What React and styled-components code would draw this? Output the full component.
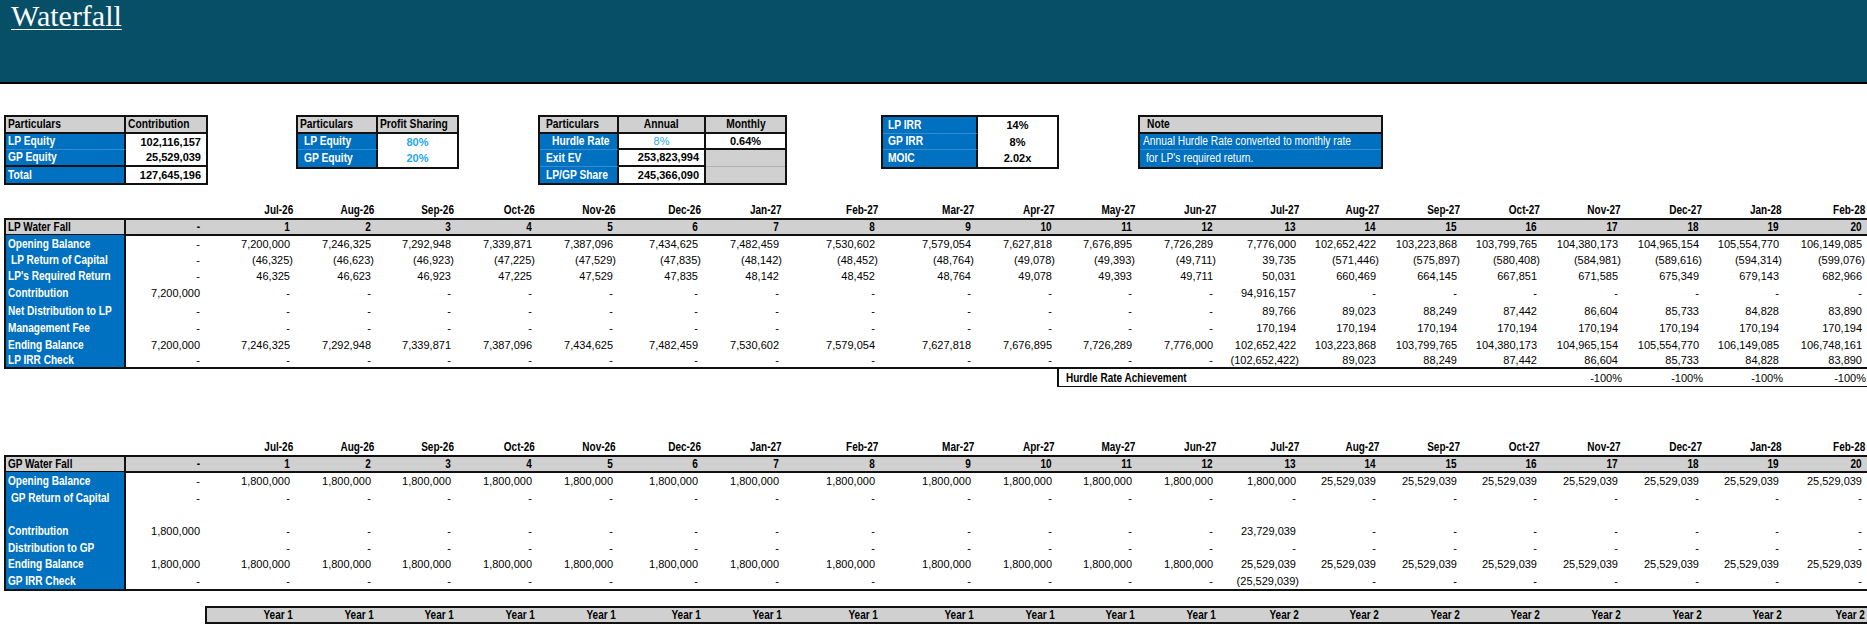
import React from "react";
import styled, { createGlobalStyle } from "styled-components";

const NARROW = `"Liberation Sans Narrow", "Arial Narrow", "Liberation Sans", Arial, sans-serif`;
const SANS = `"Liberation Sans", Arial, sans-serif`;
const SERIF = `"Liberation Serif", "Times New Roman", serif`;
const BLUE = "#0070C0";
const GREY = "#D0D0D0";
const LINE = "#111";
const SKY = "#1FA8EC";

const BG = { blue: BLUE, grey: GREY, white: "#fff", none: "transparent" };
const JUST = { left: "flex-start", center: "center", right: "flex-end" };
const BB = {
  thick: `2px solid ${LINE}`,
  faint: "1px solid rgba(255,255,255,0.2)",
  thin: "1px solid #B0B0B0",
  none: "none",
};

const Global = createGlobalStyle`
  html, body { margin: 0; padding: 0; background: #fff; overflow: hidden; }
  body { font-family: ${SANS}; width: 1867px; height: 627px; }
  *, *::before, *::after { box-sizing: border-box; }
`;

/* condensed text: the sheet uses a narrow face that is not installed */
const Nw = styled.span`
  display: inline-block;
  white-space: nowrap;
  transform: scaleX(0.82);
  transform-origin: ${(p) => p.$o || "left"} center;
`;

const Banner = styled.header`
  height: 84px;
  background: #074f67;
  border-bottom: 2px solid #000;
  padding: 1px 0 0 11px;
`;

const Title = styled.h1`
  margin: 0;
  display: inline-block;
  font-family: ${SERIF};
  font-weight: 400;
  font-size: 30px;
  line-height: 30px;
  color: #fff;
  text-decoration: underline;
  text-decoration-thickness: 1px;
  text-underline-offset: 3px;
`;

/* ---------- summary tables ---------- */

const SummaryBar = styled.section`
  display: flex;
  align-items: flex-start;
  padding: 31px 0 0 4px;
`;

const MiniTable = styled.div`
  flex: none;
  display: grid;
  grid-template-columns: ${(p) => p.$cols};
  grid-auto-rows: 16.5px;
  border: 2px solid ${LINE};
  margin-left: ${(p) => p.$ml || 0}px;
`;

const MCell = styled.div`
  display: flex;
  align-items: center;
  justify-content: ${(p) => JUST[p.$al || "left"]};
  padding: 0 ${(p) => p.$pr ?? 3}px 0 ${(p) => p.$pl ?? 3}px;
  background: ${(p) => BG[p.$bg || "white"]};
  color: ${(p) => p.$c || (p.$bg === "blue" ? "#fff" : "#000")};
  font-family: ${(p) => (p.$num ? SANS : NARROW)};
  font-size: ${(p) => (p.$num ? 11 : 12.5)}px;
  font-weight: ${(p) => p.$w || 700};
  border-right: ${(p) => (p.$r ? `2px solid ${LINE}` : "none")};
  border-bottom: ${(p) => BB[p.$b || "none"]};
  white-space: nowrap;
  min-width: 0;
`;

/* ---------- waterfall sheets ---------- */

const COLS =
  "122px 79px 90px 81px 80px 81px 81px 85px 81px 96px 96px 81px 80px 81px 83px 80px 81px 80px 81px 81px 80px 83px";

const Sheet = styled.section`
  padding-left: 4px;
`;

const SheetRow = styled.div`
  display: grid;
  grid-template-columns: ${COLS};
  height: ${(p) => p.$h}px;
  margin-top: ${(p) => p.$mt || 0}px;
`;

const Blank = styled.div``;

const DateCell = styled.div`
  display: flex;
  align-items: center;
  justify-content: flex-end;
  padding-right: 2px;
  font-family: ${NARROW};
  font-size: 12.2px;
  font-weight: 700;
  color: #000;
  min-width: 0;
`;

const HeadCell = styled.div`
  display: flex;
  align-items: center;
  justify-content: ${(p) => (p.$label ? "flex-start" : "flex-end")};
  padding: ${(p) => (p.$label ? "0 0 0 2px" : "0 5px 0 0")};
  background: ${GREY};
  border-top: 2px solid ${LINE};
  border-bottom: 2px solid ${LINE};
  border-left: ${(p) => (p.$label ? `2px solid ${LINE}` : "none")};
  border-right: ${(p) => (p.$label ? `2px solid ${LINE}` : "none")};
  font-family: ${NARROW};
  font-size: 12.2px;
  font-weight: 700;
  color: #000;
  white-space: nowrap;
  min-width: 0;
`;

const LabelCell = styled.div`
  display: flex;
  align-items: center;
  padding-left: ${(p) => (p.$indent ? 5 : 2)}px;
  background: ${BLUE};
  color: #fff;
  border-left: 2px solid ${LINE};
  border-right: 2px solid ${LINE};
  border-bottom: ${(p) => (p.$last ? `2px solid ${LINE}` : "none")};
  font-family: ${NARROW};
  font-size: 12.3px;
  font-weight: 700;
  white-space: nowrap;
  min-width: 0;
`;

const ValueCell = styled.div`
  display: flex;
  align-items: center;
  justify-content: flex-end;
  padding-right: ${(p) => (p.$neg ? 2 : 5)}px;
  border-bottom: ${(p) => (p.$last ? `2px solid ${LINE}` : "none")};
  font-family: ${SANS};
  font-size: 11px;
  color: #000;
  white-space: nowrap;
`;

const HurdleLabel = styled.div`
  grid-column: span 6;
  display: flex;
  align-items: center;
  padding-left: 7px;
  border-left: 2px solid ${LINE};
  border-bottom: 1px solid ${LINE};
  font-family: ${NARROW};
  font-size: 12.2px;
  font-weight: 700;
  color: #000;
  white-space: nowrap;
`;

const HurdleValue = styled.div`
  display: flex;
  align-items: center;
  justify-content: flex-end;
  padding-right: 1px;
  border-bottom: 1px solid ${LINE};
  font-family: ${SANS};
  font-size: 11px;
  color: #000;
`;

const YearCell = styled.div`
  display: flex;
  align-items: center;
  justify-content: flex-end;
  padding-right: 2px;
  background: ${GREY};
  border-top: 2px solid ${LINE};
  border-bottom: 2px solid ${LINE};
  border-left: ${(p) => (p.$first ? `2px solid ${LINE}` : "none")};
  font-family: ${NARROW};
  font-size: 12.2px;
  font-weight: 700;
  color: #000;
  min-width: 0;
`;

/* ---------- data ---------- */

const D = "-";
const rep = (v, n) => Array(n).fill(v);

const dates = [
  "Jul-26", "Aug-26", "Sep-26", "Oct-26", "Nov-26", "Dec-26", "Jan-27",
  "Feb-27", "Mar-27", "Apr-27", "May-27", "Jun-27", "Jul-27", "Aug-27",
  "Sep-27", "Oct-27", "Nov-27", "Dec-27", "Jan-28", "Feb-28",
];

const lpRows = [
  {
    label: "Opening Balance",
    h: 17,
    values: [
      D, "7,200,000", "7,246,325", "7,292,948", "7,339,871", "7,387,096",
      "7,434,625", "7,482,459", "7,530,602", "7,579,054", "7,627,818",
      "7,676,895", "7,726,289", "7,776,000", "102,652,422", "103,223,868",
      "103,799,765", "104,380,173", "104,965,154", "105,554,770", "106,149,085",
    ],
  },
  {
    label: "LP Return of Capital",
    indent: true,
    h: 16,
    values: [
      D, "(46,325)", "(46,623)", "(46,923)", "(47,225)", "(47,529)", "(47,835)",
      "(48,142)", "(48,452)", "(48,764)", "(49,078)", "(49,393)", "(49,711)",
      "39,735", "(571,446)", "(575,897)", "(580,408)", "(584,981)", "(589,616)",
      "(594,314)", "(599,076)",
    ],
  },
  {
    label: "LP's Required Return",
    h: 16,
    values: [
      D, "46,325", "46,623", "46,923", "47,225", "47,529", "47,835", "48,142",
      "48,452", "48,764", "49,078", "49,393", "49,711", "50,031", "660,469",
      "664,145", "667,851", "671,585", "675,349", "679,143", "682,966",
    ],
  },
  {
    label: "Contribution",
    h: 18,
    values: ["7,200,000", ...rep(D, 12), "94,916,157", ...rep(D, 7)],
  },
  {
    label: "Net Distribution to LP",
    h: 17,
    values: [
      D, ...rep(D, 12), "89,766", "89,023", "88,249", "87,442", "86,604",
      "85,733", "84,828", "83,890",
    ],
  },
  {
    label: "Management Fee",
    h: 17,
    values: [D, ...rep(D, 12), ...rep("170,194", 8)],
  },
  {
    label: "Ending Balance",
    h: 17,
    values: [
      "7,200,000", "7,246,325", "7,292,948", "7,339,871", "7,387,096",
      "7,434,625", "7,482,459", "7,530,602", "7,579,054", "7,627,818",
      "7,676,895", "7,726,289", "7,776,000", "102,652,422", "103,223,868",
      "103,799,765", "104,380,173", "104,965,154", "105,554,770", "106,149,085",
      "106,748,161",
    ],
  },
  {
    label: "LP IRR Check",
    h: 16,
    values: [
      D, ...rep(D, 12), "(102,652,422)", "89,023", "88,249", "87,442",
      "86,604", "85,733", "84,828", "83,890",
    ],
  },
];

const gpRows = [
  {
    label: "Opening Balance",
    h: 17,
    values: [D, ...rep("1,800,000", 13), ...rep("25,529,039", 7)],
  },
  { label: "GP Return of Capital", indent: true, h: 17, values: [D, ...rep(D, 20)] },
  { label: "", h: 16, values: rep("", 21) },
  {
    label: "Contribution",
    h: 17,
    values: ["1,800,000", ...rep(D, 12), "23,729,039", ...rep(D, 7)],
  },
  { label: "Distribution to GP", h: 17, values: ["", ...rep(D, 20)] },
  {
    label: "Ending Balance",
    h: 16,
    values: ["1,800,000", ...rep("1,800,000", 12), ...rep("25,529,039", 8)],
  },
  {
    label: "GP IRR Check",
    h: 19,
    values: [D, ...rep(D, 12), "(25,529,039)", ...rep(D, 7)],
  },
];

/* ---------- components ---------- */

function Waterfall({ title, rows, mt }) {
  return (
    <>
      <SheetRow $h={16} $mt={mt}>
        <Blank />
        <Blank />
        {dates.map((d) => (
          <DateCell key={d}>
            <Nw $o="right">{d}</Nw>
          </DateCell>
        ))}
      </SheetRow>
      <SheetRow $h={17}>
        <HeadCell $label>
          <Nw>{title}</Nw>
        </HeadCell>
        <HeadCell>
          <Nw $o="right">-</Nw>
        </HeadCell>
        {dates.map((d, i) => (
          <HeadCell key={d}>
            <Nw $o="right">{i + 1}</Nw>
          </HeadCell>
        ))}
      </SheetRow>
      {rows.map((r, ri) => {
        const last = ri === rows.length - 1;
        return (
          <SheetRow key={ri} $h={r.h}>
            <LabelCell $indent={r.indent} $last={last}>
              <Nw>{r.label}</Nw>
            </LabelCell>
            {r.values.map((v, ci) => (
              <ValueCell key={ci} $neg={v.startsWith("(")} $last={last}>
                {v}
              </ValueCell>
            ))}
          </SheetRow>
        );
      })}
    </>
  );
}

function Summary() {
  return (
    <SummaryBar>
      <MiniTable $cols="120px 80px">
        <MCell $bg="grey" $r $b="thick" $pl={2}><Nw>Particulars</Nw></MCell>
        <MCell $bg="grey" $b="thick" $pl={2}><Nw>Contribution</Nw></MCell>
        <MCell $bg="blue" $r $b="faint" $pl={2}><Nw>LP Equity</Nw></MCell>
        <MCell $num $al="right" $pr={5}>102,116,157</MCell>
        <MCell $bg="blue" $r $b="thick" $pl={2}><Nw>GP Equity</Nw></MCell>
        <MCell $num $al="right" $pr={5} $b="thick">25,529,039</MCell>
        <MCell $bg="blue" $r $pl={2}><Nw>Total</Nw></MCell>
        <MCell $num $al="right" $pr={5}>127,645,196</MCell>
      </MiniTable>

      <MiniTable $cols="80px 79px" $ml={88}>
        <MCell $bg="grey" $r $b="thick" $pl={2}><Nw>Particulars</Nw></MCell>
        <MCell $bg="grey" $b="thick" $pl={2}><Nw>Profit Sharing</Nw></MCell>
        <MCell $bg="blue" $r $b="faint" $pl={6}><Nw>LP Equity</Nw></MCell>
        <MCell $num $al="center" $c={SKY}>80%</MCell>
        <MCell $bg="blue" $r $pl={6}><Nw>GP Equity</Nw></MCell>
        <MCell $num $al="center" $c={SKY}>20%</MCell>
      </MiniTable>

      <MiniTable $cols="79px 87px 79px" $ml={79}>
        <MCell $bg="grey" $r $b="thick" $pl={6}><Nw>Particulars</Nw></MCell>
        <MCell $bg="grey" $r $b="thick" $al="center"><Nw $o="center">Annual</Nw></MCell>
        <MCell $bg="grey" $b="thick" $al="center"><Nw $o="center">Monthly</Nw></MCell>
        <MCell $bg="blue" $r $b="faint" $pl={12}><Nw>Hurdle Rate</Nw></MCell>
        <MCell $num $al="center" $w={400} $c={SKY} $r $b="thick">8%</MCell>
        <MCell $num $al="center" $b="thick">0.64%</MCell>
        <MCell $bg="blue" $r $b="faint" $pl={6}><Nw>Exit EV</Nw></MCell>
        <MCell $num $al="right" $pr={5} $r $b="thick">253,823,994</MCell>
        <MCell $bg="grey" $b="thin" />
        <MCell $bg="blue" $r $pl={6}><Nw>LP/GP Share</Nw></MCell>
        <MCell $num $al="right" $pr={5} $r>245,366,090</MCell>
        <MCell $bg="grey" />
      </MiniTable>

      <MiniTable $cols="95px 79px" $ml={94}>
        <MCell $bg="blue" $r $b="faint" $pl={5}><Nw>LP IRR</Nw></MCell>
        <MCell $num $al="center">14%</MCell>
        <MCell $bg="blue" $r $b="faint" $pl={5}><Nw>GP IRR</Nw></MCell>
        <MCell $num $al="center">8%</MCell>
        <MCell $bg="blue" $r $pl={5}><Nw>MOIC</Nw></MCell>
        <MCell $num $al="center">2.02x</MCell>
      </MiniTable>

      <MiniTable $cols="241px" $ml={79}>
        <MCell $bg="grey" $b="thick" $pl={7}><Nw>Note</Nw></MCell>
        <MCell $bg="blue" $b="faint" $w={400} $pl={3}>
          <Nw>Annual Hurdle Rate converted to monthly rate</Nw>
        </MCell>
        <MCell $bg="blue" $w={400} $pl={6}>
          <Nw>for LP's required return.</Nw>
        </MCell>
      </MiniTable>
    </SummaryBar>
  );
}

export default function App() {
  return (
    <>
      <Global />
      <Banner>
        <Title>Waterfall</Title>
      </Banner>
      <Summary />
      <Sheet>
        <Waterfall title="LP Water Fall" rows={lpRows} mt={17} />
        <SheetRow $h={18}>
          {rep(0, 12).map((_, i) => (
            <Blank key={i} />
          ))}
          <HurdleLabel>
            <Nw>Hurdle Rate Achievement</Nw>
          </HurdleLabel>
          {rep("-100%", 4).map((v, i) => (
            <HurdleValue key={i}>{v}</HurdleValue>
          ))}
        </SheetRow>

        <Waterfall title="GP Water Fall" rows={gpRows} mt={52} />

        <SheetRow $h={17} $mt={15}>
          <Blank />
          <Blank />
          {dates.map((d, i) => (
            <YearCell key={d} $first={i === 0}>
              <Nw $o="right">{i < 12 ? "Year 1" : "Year 2"}</Nw>
            </YearCell>
          ))}
        </SheetRow>
      </Sheet>
    </>
  );
}
